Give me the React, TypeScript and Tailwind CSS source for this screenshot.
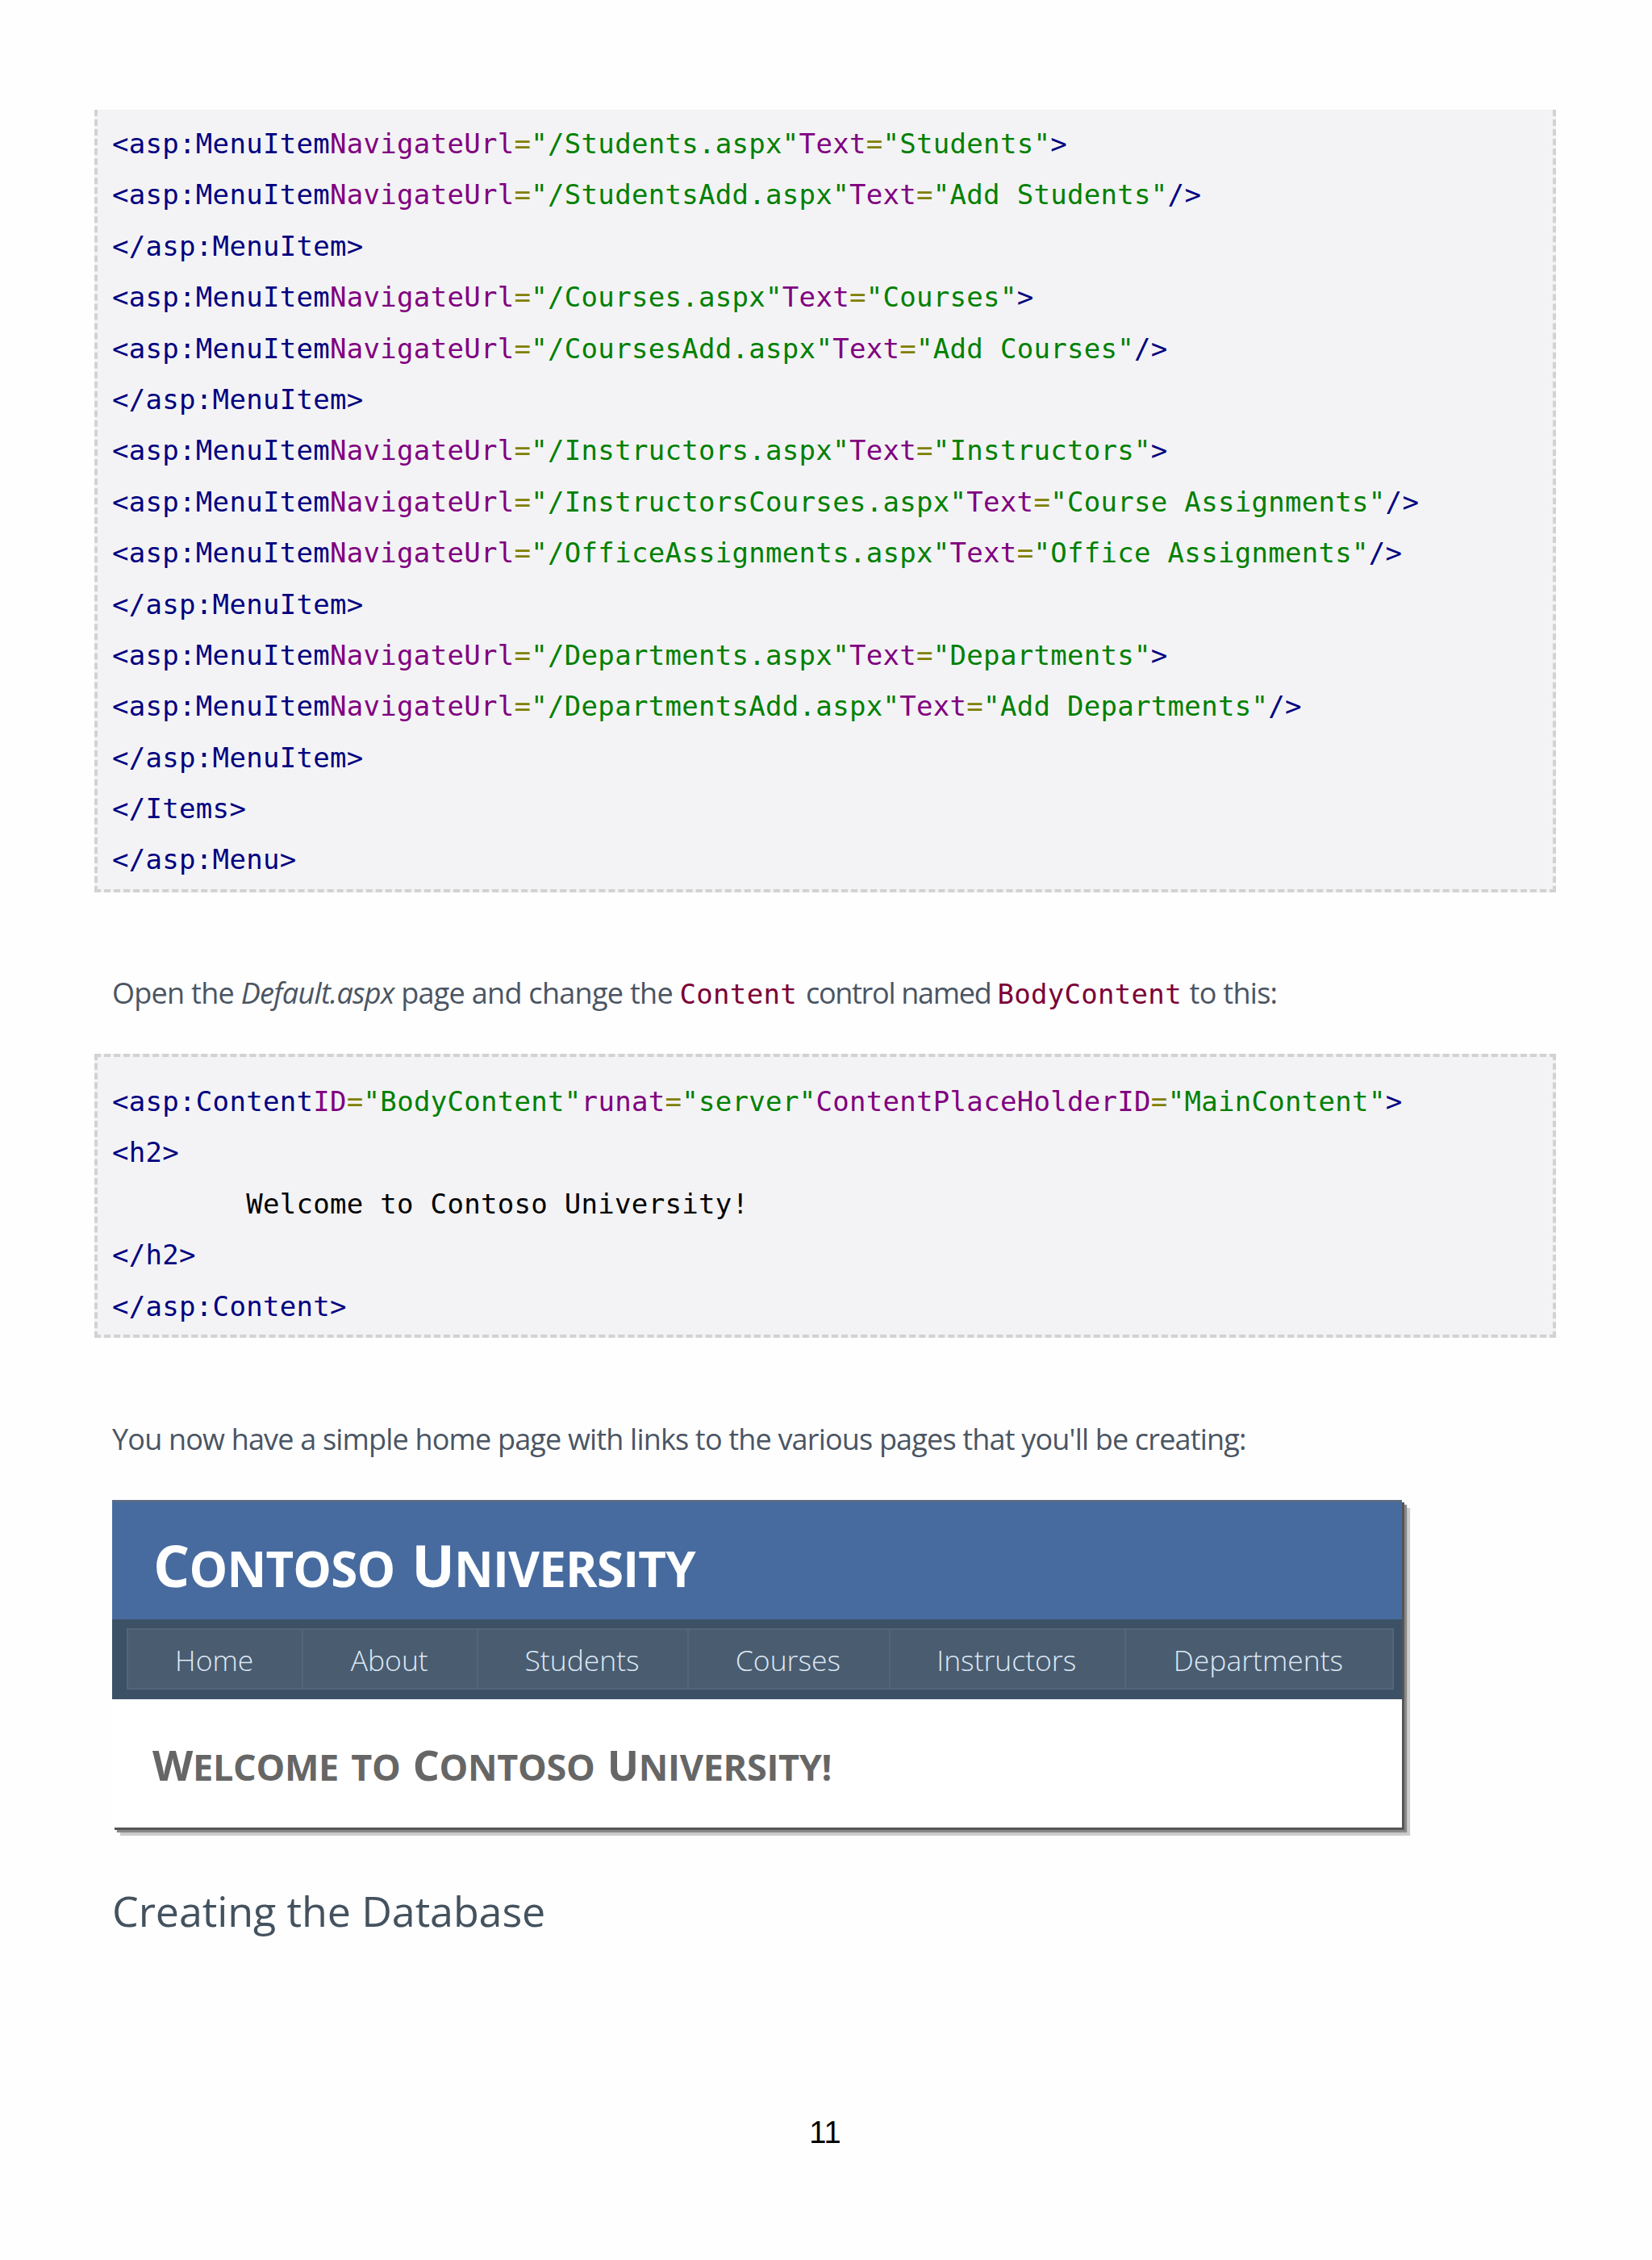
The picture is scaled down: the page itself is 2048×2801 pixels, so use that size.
import React from "react";

type Attr = [string, string];

function Tag({ tag, attrs = [], end }: { tag: string; attrs?: Attr[]; end: string }) {
  return (
    <div className="h-[63.4px] leading-[63.4px] whitespace-pre text-[#000080]">
      {tag}
      {attrs.map(([name, value]) => (
        <span key={name}>
          <span className="text-[#800080]">{name}</span>
          <span className="text-[#808000]">=</span>
          <span className="text-[#008000]">"{value}"</span>
        </span>
      ))}
      {end}
    </div>
  );
}

const item = "<asp:MenuItem";
const close = "</asp:MenuItem>";

const nav: [string, string][] = [
  ["Home", "w-[218px]"],
  ["About", "w-[217px]"],
  ["Students", "w-[262px]"],
  ["Courses", "w-[250px]"],
  ["Instructors", "w-[293px]"],
  ["Departments", "w-[331px]"],
];

function SmallCaps({ text, big, small }: { text: string; big: string; small: string }) {
  return (
    <>
      {text.split(" ").map((w, i) => (
        <span key={i}>
          {i > 0 ? <span className={big}> </span> : null}
          {w === "to" ? (
            <span className={small + " uppercase"}>{w}</span>
          ) : (
            <>
              <span className={big}>{w[0]}</span>
              <span className={small + " uppercase"}>{w.slice(1)}</span>
            </>
          )}
        </span>
      ))}
    </>
  );
}

export default function App() {
  const mono = "font-['DejaVu_Sans_Mono',monospace] text-[34px] tracking-[0.3px]";
  return (
    <div className="relative w-[2048px] h-[2801px] bg-[#fefefe] pt-[136px] pl-[117px] font-['Open_Sans',sans-serif]">
      <div className={`w-[1812px] h-[970px] bg-[#f3f3f5] border-x-4 border-b-4 border-dashed border-[#d2d2d2] pl-[18px] pt-[11px] ${mono}`}>
        <Tag tag={item} attrs={[["NavigateUrl", "/Students.aspx"], ["Text", "Students"]]} end=">" />
        <Tag tag={item} attrs={[["NavigateUrl", "/StudentsAdd.aspx"], ["Text", "Add Students"]]} end="/>" />
        <Tag tag={close} end="" />
        <Tag tag={item} attrs={[["NavigateUrl", "/Courses.aspx"], ["Text", "Courses"]]} end=">" />
        <Tag tag={item} attrs={[["NavigateUrl", "/CoursesAdd.aspx"], ["Text", "Add Courses"]]} end="/>" />
        <Tag tag={close} end="" />
        <Tag tag={item} attrs={[["NavigateUrl", "/Instructors.aspx"], ["Text", "Instructors"]]} end=">" />
        <Tag tag={item} attrs={[["NavigateUrl", "/InstructorsCourses.aspx"], ["Text", "Course Assignments"]]} end="/>" />
        <Tag tag={item} attrs={[["NavigateUrl", "/OfficeAssignments.aspx"], ["Text", "Office Assignments"]]} end="/>" />
        <Tag tag={close} end="" />
        <Tag tag={item} attrs={[["NavigateUrl", "/Departments.aspx"], ["Text", "Departments"]]} end=">" />
        <Tag tag={item} attrs={[["NavigateUrl", "/DepartmentsAdd.aspx"], ["Text", "Add Departments"]]} end="/>" />
        <Tag tag={close} end="" />
        <Tag tag="</Items>" end="" />
        <Tag tag="</asp:Menu>" end="" />
      </div>

      <p className="mt-[93px] ml-[22px] h-[63px] leading-[63px] text-[36px] tracking-[-0.71px] text-[#4a5563] whitespace-pre">
        Open the <em>Default.aspx</em> page and change the{" "}
        <span className={`${mono} text-[#7b0036]`}>Content</span>
        <span className="ml-[3px] tracking-[-1.3px]"> control named </span>
        <span className={`${mono} text-[#7b0036]`}>BodyContent</span>
        <span className="ml-[1px]"> to this:</span>
      </p>

      <div className={`mt-[44px] w-[1812px] h-[352px] bg-[#f3f3f5] border-4 border-dashed border-[#d2d2d2] pl-[18px] pt-[24px] ${mono}`}>
        <Tag tag="<asp:Content" attrs={[["ID", "BodyContent"], ["runat", "server"], ["ContentPlaceHolderID", "MainContent"]]} end=">" />
        <Tag tag="<h2>" end="" />
        <div className="h-[63.4px] leading-[63.4px] whitespace-pre text-black">{"        Welcome to Contoso University!"}</div>
        <Tag tag="</h2>" end="" />
        <Tag tag="</asp:Content>" end="" />
      </div>

      <p className="mt-[94px] ml-[22px] h-[63px] leading-[63px] text-[36px] tracking-[-0.82px] text-[#4a5563] whitespace-pre">
        You now have a simple home page with links to the various pages that you'll be creating:
      </p>

      <div className="mt-[44px] ml-[22px] w-[1599px] h-[406px] bg-white shadow-[3px_3px_0_#555,6px_6px_1px_#888,10px_10px_1px_#ccc] flex flex-col">
        <div className="h-[148px] border-t-[3px] border-[#5b6c86] bg-[#476b9f] pl-[51px] pt-[42px] text-white font-bold leading-[72px] tracking-[-0.8px] [word-spacing:3px]">
          <SmallCaps text="Contoso University" big="text-[71px]" small="text-[60px]" />
        </div>
        <div className="h-[99px] bg-[#3c5166] pl-[18px] pt-[11px]">
          <div className="flex w-[1571px] h-[76px] bg-[#4a5c70] border-2 border-[#536579]">
            {nav.map(([label, w]) => (
              <div key={label} className={`${w} flex items-center justify-center pr-[2px] pt-[4px] border-r-2 last:border-r-0 border-[#536579] text-[#dde8f4] text-[35.5px] font-light`}>
                {label}
              </div>
            ))}
          </div>
        </div>
        <div className="pl-[50px] pt-[49px] text-[#666] font-bold leading-[64px] tracking-[-0.3px] [word-spacing:2px] whitespace-pre">
          <SmallCaps text="Welcome to Contoso University!" big="text-[52px]" small="text-[45px]" />
        </div>
      </div>

      <h2 className="mt-[67px] ml-[22px] text-[52px] leading-[72px] font-normal text-[#44525f] tracking-[-0.1px]">Creating the Database</h2>

      <div className="mt-[215px] w-[1812px] text-center text-[38px] leading-[48px] text-black font-['Liberation_Sans',sans-serif]">11</div>
    </div>
  );
}
